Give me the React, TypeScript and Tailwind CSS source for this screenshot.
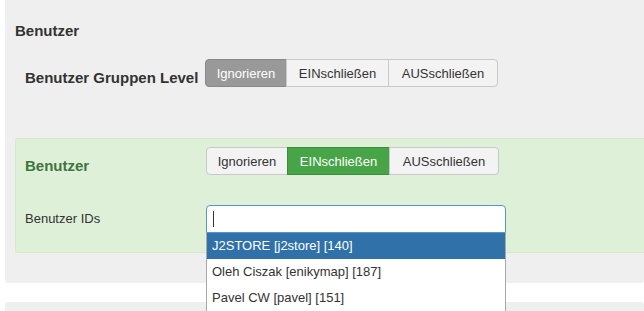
import { useState } from 'react';

type Mode = 'ignore' | 'include' | 'exclude';

const modes: { key: Mode; label: string; width: string }[] = [
    { key: 'ignore', label: 'Ignorieren', width: 'w-[82px]' },
    { key: 'include', label: 'EINschließen', width: 'w-[103px]' },
    { key: 'exclude', label: 'AUSschließen', width: 'w-[110px]' }
];

const users = [
    { name: 'J2STORE [j2store] [140]' },
    { name: 'Oleh Ciszak [enikymap] [187]' },
    { name: 'Pavel CW [pavel] [151]' }
];

const ModeGroup = ({ value, onChange }: { value: Mode; onChange: (m: Mode) => void }) => {
    const activeClass = (key: Mode) => {
        if (value !== key) return 'bg-[#f3f3f3] border-[#c8c8c8] text-[#333]';
        return key === 'ignore'
            ? 'bg-[#999] border-[#888] text-white'
            : 'bg-[#47a447] border-[#3d8b3d] text-white';
    };

    return (
        <div className="flex h-[28px]">
            {modes.map((m, i) => (
                <button
                    key={m.key}
                    onClick={() => onChange(m.key)}
                    className={`border text-center text-[13px] leading-none ${m.width} ${activeClass(m.key)} ${i === 0 ? 'rounded-l-[4px]' : '-ml-px'} ${i === modes.length - 1 ? 'rounded-r-[4px]' : ''}`}
                >
                    {m.label}
                </button>
            ))}
        </div>
    );
};

export default function App() {
    const [groupMode, setGroupMode] = useState<Mode>('ignore');
    const [userMode, setUserMode] = useState<Mode>('include');
    const [active, setActive] = useState(0);

    return (
        <div className="h-[311px] overflow-hidden bg-white pl-[5px] font-['Liberation_Sans',Arial,sans-serif] text-[#333]">
            <div className="h-[283px] rounded-b-[3px] bg-[#efefef] pt-[22px]">
                <h3 className="pl-[10px] text-[15px] font-bold leading-[18px]">Benutzer</h3>

                {/* Gruppen Level */}
                <div className="mt-[19px] flex h-[28px] items-start pl-[20px]">
                    <label className="w-[180px] pt-[10px] text-[15px] font-bold leading-[18px]">Benutzer Gruppen Level</label>
                    <ModeGroup value={groupMode} onChange={setGroupMode} />
                </div>

                {/* Benutzer */}
                <div className="ml-[10px] mt-[51px] h-[115px] rounded-l-[3px] border border-r-0 border-[#d6e9c6] bg-[#dff0d8] pl-[9px] pt-[8px]">
                    <div className="flex h-[28px] items-start">
                        <label className="w-[181px] pt-[10px] text-[15px] font-bold leading-[18px] text-[#3c763d]">Benutzer</label>
                        <ModeGroup value={userMode} onChange={setUserMode} />
                    </div>
                    <div className="mt-[30px] flex items-center">
                        <label className="w-[181px] text-[13px]">Benutzer IDs</label>
                        <div className="relative z-10 w-[300px]">
                            <div className="flex h-[28px] items-center rounded-t-[4px] border border-[#5a95c9] bg-white px-[6px]">
                                <span className="h-[16px] w-px bg-[#333]" />
                            </div>
                            <ul className="absolute left-0 top-full w-full border-x border-[#aaa] bg-white">
                                {users.map((u, i) => (
                                    <li
                                        key={u.name}
                                        onMouseEnter={() => setActive(i)}
                                        className={`flex h-[26px] items-center px-[5px] text-[13px] ${active === i ? 'bg-[#3071a9] text-white' : 'text-[#333]'}`}
                                    >
                                        {u.name}
                                    </li>
                                ))}
                            </ul>
                        </div>
                    </div>
                </div>
            </div>
            <div className="mt-[19px] h-[9px] rounded-t-[3px] bg-[#efefef]" />
        </div>
    );
}
